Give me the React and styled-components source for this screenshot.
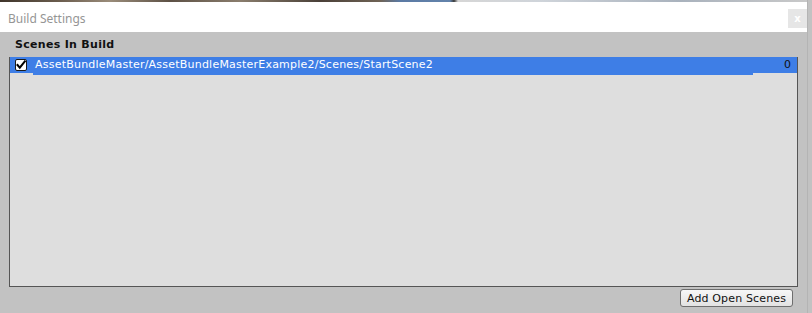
import React from "react";
import styled, { createGlobalStyle } from "styled-components";

const GlobalStyle = createGlobalStyle`
  html, body { margin: 0; padding: 0; background: #c2c2c2; }
  body { font-family: "DejaVu Sans", Verdana, sans-serif; overflow: hidden; }
`;

const Page = styled.div`
  display: flex;
  width: 812px;
  height: 313px;
  background: #c2c2c2;
`;

const Window = styled.div`
  width: 808px;
  display: flex;
  flex-direction: column;
  border-right: 1px solid #b4b4b4;
  box-sizing: border-box;
`;

const TopStrip = styled.div`
  height: 2px;
  background: linear-gradient(
    90deg,
    #3f352b 0px,
    #6b5d4e 60px,
    #9a8c7a 110px,
    #5d5145 170px,
    #8a7d6d 240px,
    #4a4038 320px,
    #6f6355 380px,
    #5b7aa4 400px,
    #6383ab 450px,
    #3a3a3a 454px,
    #d6d6d6 458px,
    #cfd4da 540px,
    #a9b2bd 680px,
    #c9c9c9 808px
  );
`;

const TitleBar = styled.div`
  height: 30px;
  background: #ffffff;
  display: flex;
  align-items: center;
  justify-content: space-between;
  padding: 0 0 0 8px;
`;

const Title = styled.span`
  font-family: "Noto Sans", "Open Sans", sans-serif;
  font-size: 12px;
  color: #959595;
  position: relative;
  top: 1px;
`;

const CloseButton = styled.div`
  width: 19px;
  height: 19px;
  background: #e6e6e6;
  display: flex;
  align-items: center;
  justify-content: center;
  align-self: flex-start;
  margin-top: 7px;
  color: #ffffff;
  font-family: "DejaVu Sans", sans-serif;
  font-size: 10px;
  font-weight: bold;
`;

const Body = styled.div`
  flex: 1;
  background: #c2c2c2;
  display: flex;
  flex-direction: column;
  padding: 0 9px 0 9px;
`;

const SectionLabel = styled.div`
  height: 25px;
  box-sizing: border-box;
  padding: 6px 0 0 6px;
  font-size: 11px;
  font-weight: bold;
  color: #111111;
  letter-spacing: 0.3px;
`;

const ListBox = styled.div`
  height: 230px;
  box-sizing: border-box;
  background: #dedede;
  border: 1px solid #555555;
  border-top: none;
  display: flex;
  flex-direction: column;
`;

const Row = styled.div`
  display: flex;
  align-items: flex-start;
  height: 18px;
`;

const Blue = "#3e7ee6";

const CheckCell = styled.div`
  width: 23px;
  height: 16px;
  background: ${Blue};
  display: flex;
  align-items: center;
  padding-left: 5px;
  box-sizing: border-box;
`;

const Label = styled.div`
  flex: 1;
  height: ${(p) => p.$h}px;
  background: ${Blue};
  color: #ffffff;
  font-size: 11px;
  line-height: 16px;
  letter-spacing: 0.22px;
  padding-left: 2px;
  white-space: nowrap;
`;

const IndexCell = styled.div`
  width: 44px;
  height: 16px;
  background: ${Blue};
  color: #111111;
  font-size: 11px;
  line-height: 16px;
  text-align: right;
  padding-right: 6px;
  box-sizing: border-box;
`;

const Footer = styled.div`
  display: flex;
  justify-content: flex-end;
  padding: 2px 5px 0 0;
`;

const Button = styled.button`
  height: 18px;
  width: 113px;
  box-sizing: border-box;
  padding: 0;
  border: 1px solid #6e6e6e;
  border-radius: 3px;
  background: linear-gradient(#f7f7f7, #e2e2e2);
  font-family: "DejaVu Sans", Verdana, sans-serif;
  font-size: 11px;
  letter-spacing: 0.15px;
  color: #111111;
  line-height: 15px;
`;

const CheckBox = () => (
  <svg width="12" height="12" viewBox="0 0 12 12">
    <rect x="0.5" y="0.5" width="11" height="11" rx="1.5" fill="#ffffff" stroke="#1a1a1a" />
    <path d="M2.5 6 L4.8 8.6 L9.8 2.4" fill="none" stroke="#000000" strokeWidth="2" strokeLinecap="square" />
  </svg>
);

export default function App() {
  return (
    <>
      <GlobalStyle />
      <Page>
        <Window>
          <TopStrip />
          <TitleBar>
            <Title>Build Settings</Title>
            <CloseButton>x</CloseButton>
          </TitleBar>
          <Body>
            <SectionLabel>Scenes In Build</SectionLabel>
            <ListBox>
              <Row>
                <CheckCell>
                  <CheckBox />
                </CheckCell>
                <Label $h={18}>AssetBundleMaster/AssetBundleMasterExample2/Scenes/StartScene2</Label>
                <IndexCell>0</IndexCell>
              </Row>
            </ListBox>
            <Footer>
              <Button>Add Open Scenes</Button>
            </Footer>
          </Body>
        </Window>
      </Page>
    </>
  );
}
